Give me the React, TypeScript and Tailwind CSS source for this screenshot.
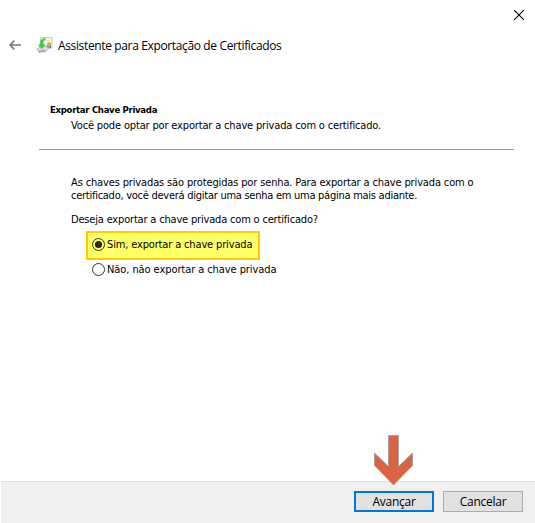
import React from 'react';

const tahoma = "font-['DejaVu_Sans_Condensed','DejaVu_Sans',sans-serif] [font-stretch:condensed]";
const segoe = "font-['Open_Sans','Noto_Sans',sans-serif] [font-stretch:normal]";

function CertificateIcon() {
  return (
    <svg width="18" height="18" viewBox="0 0 18 18" aria-hidden="true">
      <path d="M4.500 1.500h11.500v10h-11.500z" fill="#f7f4ea" stroke="#cfcabb" />
      <path d="M9 4.500h5" stroke="#e2dfd5" />
      <path d="M11.200 9h1.500v4l-1.500-1zM13.500 9h1.500v4l-1.500-1z" fill="#4d7cba" />
      <circle cx="13.100" cy="8" r="1.900" fill="#f0a424" />
      <path d="M.8 13.200l3.200-2.600 6.500-.6 2 2.600-2.500 3L3 16.500z" fill="#d9dbdc" stroke="#9da2a5" strokeWidth=".7" />
      <path d="M3 15.200l6-.6" stroke="#777d80" strokeWidth=".8" />
      <path d="M9.500 2C5.500 2.400 3.800 5 4 8.800L2 9l4 4 3.300-4.700-2 .2C7 6 7.600 4.200 9.800 3z" fill="#42c840" stroke="#72d570" strokeWidth=".6" />
    </svg>
  );
}

function Radio({ label, checked = false, spacing }: { label: string; checked?: boolean; spacing: string }) {
  return (
    <label className="flex items-center">
      <svg width="13" height="13" viewBox="0 0 13 13" className="mr-[2px] shrink-0">
        <circle cx="6.5" cy="6.5" r="6" fill={checked ? '#ffff66' : '#fff'} stroke="#333" />
        {checked && <circle cx="6.5" cy="6.5" r="3.6" fill="#2b2b1c" />}
      </svg>
      <span className={spacing}>{label}</span>
    </label>
  );
}

export default function App() {
  return (
    <div className={`relative flex h-[523px] w-[535px] flex-col overflow-hidden bg-white text-[11px] leading-[13px] whitespace-nowrap text-black ${tahoma}`}>
      <header className="h-[95px]">
        <div className="flex h-[30px] justify-end pt-[10px] pr-[11px]">
          <svg width="10" height="10" viewBox="0 0 10 10" aria-label="Fechar">
            <path d="M0 0l10 10M10 0L0 10" stroke="#000" strokeWidth="1.1" />
          </svg>
        </div>
        <div className="flex h-[30px] items-center pl-[9px]">
          <svg width="12" height="10" viewBox="0 0 12 10" fill="none" stroke="#777" strokeWidth="1.7" aria-label="Voltar">
            <path d="M5.200 .6L1.200 5l4 4.400M1 5h11" />
          </svg>
          <span className="ml-[15px]"><CertificateIcon /></span>
          <h1 className={`mt-[2px] ml-[4px] text-[12px] leading-[16px] tracking-[-0.36px] ${segoe}`}>Assistente para Exportação de Certificados</h1>
        </div>
      </header>

      <section className="ml-[39px] h-[55px] w-[475px] border-b border-[#a0a0a0] pt-[8px] pl-[11px]">
        <h2 className="text-[9.5px] font-bold tracking-[-0.3px]">Exportar Chave Privada</h2>
        <p className="mt-[3px] pl-[21px] tracking-[-0.16px]">Você pode optar por exportar a chave privada com o certificado.</p>
      </section>

      <main className="flex-1 pt-[26px] pl-[71px]">
        <p className="tracking-[-0.14px]">As chaves privadas são protegidas por senha. Para exportar a chave privada com o</p>
        <p className="tracking-[-0.26px]">certificado, você deverá digitar uma senha em uma página mais adiante.</p>
        <p className="mt-[11px] tracking-[-0.18px]">Deseja exportar a chave privada com o certificado?</p>
        <div className="mt-[5px] ml-[15px] flex h-[29px] w-[174px] items-center border-2 border-[#ffcc00] bg-[#ffff66] pb-[3px] pl-[4px]">
          <Radio label="Sim, exportar a chave privada" checked spacing="tracking-[-0.15px]" />
        </div>
        <div className="mt-[2px] ml-[21px]">
          <Radio label="Não, não exportar a chave privada" spacing="tracking-[-0.08px] pt-px" />
        </div>
      </main>

      <footer className={`ml-px flex h-[42px] gap-[9px] border-t border-[#dfdfdf] bg-[#f0f0f0] pt-[9px] pl-[353px] text-[12px] tracking-[-0.25px] ${segoe}`}>
        <button className="h-[21px] w-[80px] border-2 border-[#0078d7] bg-[#e1e1e1]">Avançar</button>
        <button className="h-[21px] w-[80px] border border-[#adadad] bg-[#e1e1e1]">Cancelar</button>
      </footer>

      <svg className="absolute top-[434px] left-[373px]" width="41" height="53" viewBox="0 0 41 53">
        <path d="M15.500 1.500h10v31l14-13.500v12.500L20.500 51 1.500 31.500V19l14 13.500z" fill="#dc6342" stroke="#aaa29b" />
      </svg>
    </div>
  );
}
